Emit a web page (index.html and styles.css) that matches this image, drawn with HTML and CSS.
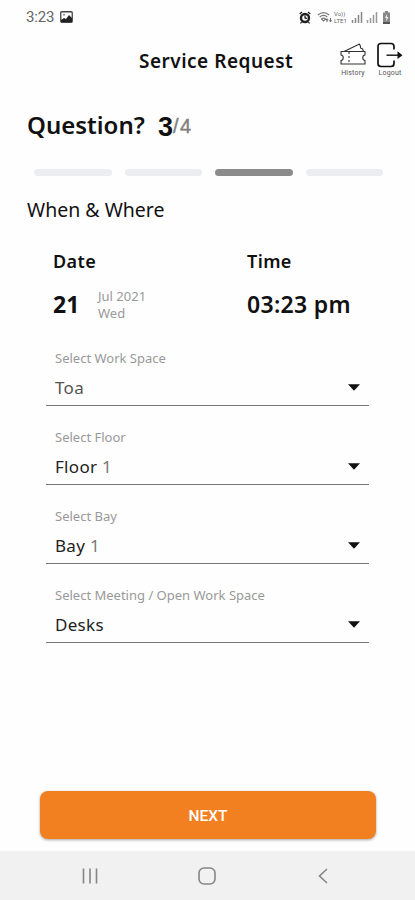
FILE: index.html
```html
<!DOCTYPE html>
<html lang="en">
<head>
<meta charset="utf-8">
<title>Service Request</title>
<link rel="stylesheet" href="styles.css">
</head>
<body>
<div class="screen">
  <div class="status">
    <span class="clock">3:23</span>
    <svg class="photo" width="13" height="12" viewBox="0 0 13 12"><rect x=".75" y=".75" width="11.5" height="10.5" rx="1" fill="none" stroke="#444" stroke-width="1.3"/><path d="M1 11V9l3-2 2 1 3-4 3 3v4z" fill="#222"/><circle cx="4" cy="3.8" r="1" fill="#888"/></svg>
    <div class="signals">
      <svg width="12" height="13" viewBox="0 0 12 13"><circle cx="6" cy="7" r="4" fill="none" stroke="#222" stroke-width="2.4"/><path d="M.7 3 3 1M9 1l2.3 2M2.5 11l-1 1.5M9.5 11l1 1.5M6 4.5V7l2 .5" fill="none" stroke="#222" stroke-width="1.3"/></svg>
      <svg class="wifi" width="16" height="13" viewBox="0 0 16 13"><path d="M.8 4Q6.5-.8 12.2 4M2.7 6Q6.500 2.800 10.300 6M4.500 8Q6.500 6.300 8.500 8L6.500 10zM10 11V8m-1.200 1.200L10 8l1.200 1.200M13.500 7v3.500m-1.200-1.200 1.200 1.200 1.200-1.200" fill="none" stroke="#777" stroke-width="1.100"/></svg>
      <span class="lte"><span>Vo))</span><span>LTE1</span></span>
      <svg class="bars" width="12" height="12" viewBox="0 0 12 12"><path d="M1.5 12V9M4.5 12V7M7.5 12V4M10.5 12V1" stroke="#888" stroke-width="1.5"/></svg>
      <svg class="bars2" width="12" height="12" viewBox="0 0 12 12"><path d="M1.5 12V9M4.5 12V7M7.5 12V4M10.5 12V1" stroke="#999" stroke-width="1.5"/></svg>
      <svg class="battery" width="9" height="13" viewBox="0 0 9 13"><path d="M3 0h3v1.5h2V13H1V1.5h2z" fill="#888"/><path d="M5 3 3 7h1.5L4 10.500 6.500 6H5z" fill="#eee"/><path d="M1 11h7v2H1z" fill="#555"/></svg>
    </div>
  </div>

  <header class="header">
    <h1>Service Request</h1>
    <div class="action history">
      <svg width="26" height="24" viewBox="0 0 26 24" fill="none" stroke="#333" stroke-width="1.100" stroke-linejoin="round"><path d="M1 9.500h24V13c-3 .5-3 5 0 5.500V22H1v-3.500c3-.5 3-5 0-5.500zM4 9.500 19.500 2l1 2.500c-.3 1.500.5 2.400 2 2.200l1 2.800"/><path d="M9 10v12" stroke-dasharray="2 2"/></svg>
      <span>History</span>
    </div>
    <div class="action logout">
      <svg width="26" height="26" viewBox="0 0 26 26" fill="none" stroke="#111" stroke-width="1.700"><path d="M17 7.500V4.500Q17 1.500 14 1.500H4Q1 1.500 1 4.500v17q0 3 3 3h10q3 0 3-3v-3"/><path d="M9.500 13.200H22" stroke-width="1.400"/><path d="m20.500 9.300 5 3.900-5 3.900z" fill="#111" stroke="none"/></svg>
      <span>Logout</span>
    </div>
  </header>

  <main>
    <div class="question"><h2>Question?</h2><span class="current">3</span><span class="total">/4</span></div>
    <div class="progress"><i></i><i></i><i class="active"></i><i></i></div>
    <h3>When &amp; Where</h3>

    <section class="when">
      <div class="date">
        <h4>Date</h4>
        <div class="value"><strong class="day">21</strong><span class="month">Jul 2021<br>Wed</span></div>
      </div>
      <div class="time">
        <h4>Time</h4>
        <div class="value"><strong class="hour">03:23 pm</strong></div>
      </div>
    </section>

    <section class="fields">
      <div class="field"><label>Select Work Space</label><div class="select light"><span>Toa</span><svg width="12" height="7" viewBox="0 0 12 7"><path d="M0 .3h12L6 6.700z"/></svg></div></div>
      <div class="field"><label>Select Floor</label><div class="select"><span>Floor <em>1</em></span><svg width="12" height="7" viewBox="0 0 12 7"><path d="M0 .3h12L6 6.700z"/></svg></div></div>
      <div class="field"><label>Select Bay</label><div class="select"><span>Bay <em>1</em></span><svg width="12" height="7" viewBox="0 0 12 7"><path d="M0 .3h12L6 6.700z"/></svg></div></div>
      <div class="field"><label>Select Meeting / Open Work Space</label><div class="select"><span>Desks</span><svg width="12" height="7" viewBox="0 0 12 7"><path d="M0 .3h12L6 6.700z"/></svg></div></div>
    </section>
  </main>

  <button class="next">NEXT</button>

  <nav class="nav">
    <svg width="16" height="16" viewBox="0 0 16 16"><path d="M1.500 .5v15M8 .5v15M14.500 .5v15" stroke="#858585" stroke-width="1.600"/></svg>
    <svg class="home" width="18" height="18" viewBox="0 0 18 18"><rect x="1" y="1" width="16" height="16" rx="5" fill="none" stroke="#858585" stroke-width="1.600"/></svg>
    <svg width="10" height="16" viewBox="0 0 10 16"><path d="M9 1 1.500 8 9 15" fill="none" stroke="#858585" stroke-width="1.600"/></svg>
  </nav>
</div>
</body>
</html>
```
FILE: styles.css
```css
* { box-sizing: border-box; }
body { margin: 0; background: #fefefe; font-family: "Noto Sans", "Open Sans", sans-serif; color: #111; }
h1, h2, h3, h4 { margin: 0; }
svg { display: block; flex: none; }
.screen { width: 415px; height: 900px; display: flex; flex-direction: column; overflow: hidden; background: #fefefe; }

.status { height: 34px; display: flex; align-items: center; padding: 0 24px 0 26px; }
.clock { font: 15px/20px Roboto, sans-serif; color: #666; width: 34px; letter-spacing: -.2px; }
.signals { display: flex; align-items: center; margin-left: auto; }
.wifi { margin-left: 6px; }
.lte { display: flex; flex-direction: column; margin-left: 1px; width: 16px; font: 6px/7px Roboto, sans-serif; color: #666; }
.bars { margin-left: 1px; }
.bars2 { margin-left: 3px; }
.battery { margin-left: 4px; }

.header { height: 56px; display: flex; padding: 8px 11px 0 139px; }
h1 { font-size: 19px; line-height: 26px; font-weight: 600; letter-spacing: .5px; width: 190px; padding-top: 6px; white-space: nowrap; }
.action { display: flex; flex-direction: column; align-items: center; justify-content: space-between; width: 28px; height: 35px; font: 7px/8px Roboto, sans-serif; letter-spacing: .2px; color: #555; }
.history { margin-left: 10px; }
.logout { margin-left: 9px; }

main { flex: 1; }
.question { display: flex; align-items: flex-start; height: 52px; padding: 18px 27px 0; }
.question h2 { font-size: 24px; line-height: 34px; font-weight: 600; width: 131px; }
.current { font: 700 27px/38px "Liberation Sans", sans-serif; }
.total { font: 20px/37px "Liberation Sans", sans-serif; letter-spacing: 1.5px; color: #808080; -webkit-text-stroke: .4px #808080; }
.progress { display: grid; grid-template-columns: repeat(4, 1fr); gap: 13px; padding: 27px 32px 0 34px; }
.progress i { height: 7px; border-radius: 4px; background: #ebedf1; }
.progress .active { background: #8b8b8b; }
h3 { font-size: 19.500px; line-height: 28px; font-weight: 400; padding: 20px 27px 0; }

.when { display: flex; padding: 25px 53px 0; }
.date { width: 194px; }
h4 { font-size: 18px; line-height: 24px; font-weight: 600; letter-spacing: .4px; }
.value { display: flex; align-items: center; height: 48px; margin-top: 7px; }
.day { font-size: 23px; font-weight: 700; width: 45px; }
.month { font-size: 13px; line-height: 17.500px; padding-top: 2px; color: #999; }
.hour { font-size: 23px; font-weight: 600; letter-spacing: .3px; white-space: nowrap; }

.fields { padding: 20px 46px 0; }
.field { height: 79px; }
label { display: block; padding-left: 9px; font-size: 13px; line-height: 20px; color: #999; }
.select { display: flex; justify-content: space-between; align-items: center; height: 38px; padding: 1px 9px 0 9px; border-bottom: 1px solid #777; font-size: 17px; letter-spacing: .3px; color: #222; }
.select svg { fill: #111; }
.select em { font-style: normal; color: #777; }
.light span { color: #555; }

.next { width: 336px; height: 48px; flex: none; margin: 0 0 12px 40px; padding: 2px 0 0; border: 0; border-radius: 8px; background: #f38020; color: #fff; font: 500 15.500px/20px Roboto, sans-serif; box-shadow: 0 1px 3px rgba(0, 0, 0, .35); }
.nav { height: 49px; flex: none; display: flex; justify-content: space-between; align-items: center; padding: 0 87px 0 82px; background: #f1f1f1; }
.home { margin-right: 3px; }
```
